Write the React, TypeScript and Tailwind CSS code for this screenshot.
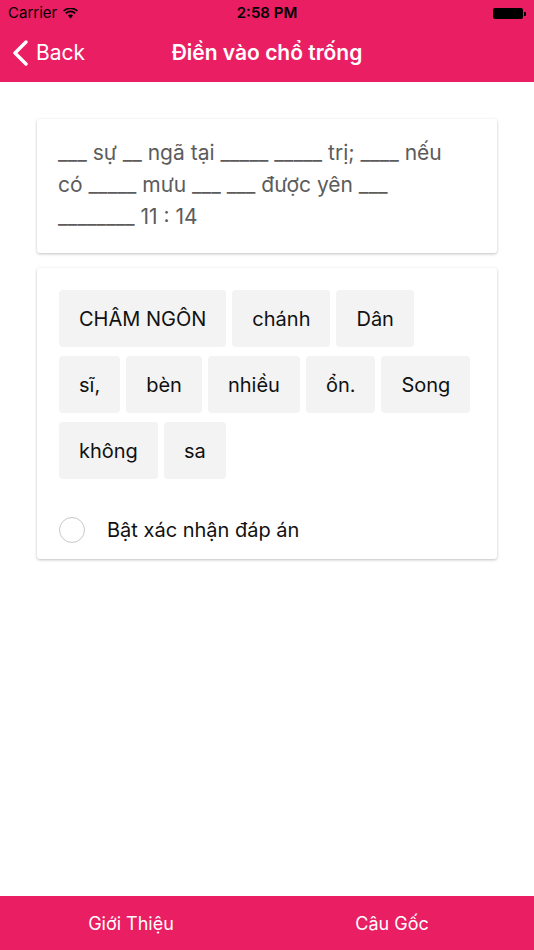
import React from "react";

const words = [
  ["CHÂM NGÔN", "chánh", "Dân"],
  ["sĩ,", "bèn", "nhiều", "ổn.", "Song"],
  ["không", "sa"],
];

export default function App() {
  return (
    <div className="w-[534px] h-[950px] flex flex-col bg-white overflow-hidden" style={{ fontFamily: "Inter, 'Noto Sans', sans-serif" }}>
      <div className="bg-[#e91e63] h-[82px] flex flex-col shrink-0">
        <div className="h-[27px] flex items-center px-[8px] relative text-[15px] text-black">
          <div className="flex items-center gap-[6px]">
            <span>Carrier</span>
            <svg width="15" height="11" viewBox="0 0 15 11">
              <path d="M7.5 10.5 L5 7.6 A3.6 3.6 0 0 1 10 7.6 Z" fill="black" />
              <path d="M2.8 5.3 A6.8 6.8 0 0 1 12.2 5.3" stroke="black" strokeWidth="1.6" fill="none" />
              <path d="M0.6 3 A10 10 0 0 1 14.4 3" stroke="black" strokeWidth="1.6" fill="none" />
            </svg>
          </div>
          <span className="absolute left-0 right-0 text-center font-semibold">2:58 PM</span>
          <div className="ml-auto flex items-center">
            <div className="w-[30px] h-[11px] bg-black rounded-[2px]" />
            <div className="w-[2px] h-[4px] bg-black ml-[1px] rounded-r-[1px]" />
          </div>
        </div>
        <div className="flex-1 flex items-center relative pb-[3px]">
          <div className="flex items-center pl-[12px] text-white gap-[7px]">
            <svg width="17" height="26" viewBox="0 0 17 26">
              <path d="M14 2 L3 13 L14 24" stroke="white" strokeWidth="3.4" fill="none" strokeLinecap="round" strokeLinejoin="round" />
            </svg>
            <span className="text-[21px]">Back</span>
          </div>
          <span className="absolute left-0 right-0 text-center text-white text-[21px] font-semibold pointer-events-none">Điền vào chổ trống</span>
        </div>
      </div>

      <div className="flex-1 px-[37px] pt-[37px] flex flex-col gap-[15px]">
        <div className="bg-white rounded-[3px] shadow-[0_1px_3px_rgba(0,0,0,0.25)] pl-[21px] pr-[30px] pt-[18px] pb-[20px] text-[21px] leading-[32px] text-[#5c5c5c]">
          ___ sự __ ngã tại _____ _____ trị; ____ nếu có _____ mưu ___ ___ được yên ___ ________ 11 : 14
        </div>
        <div className="bg-white rounded-[3px] shadow-[0_1px_3px_rgba(0,0,0,0.25)] px-[22px] pt-[22px] pb-[16px]">
          <div className="flex flex-col gap-[9px]">
            {words.map((row, i) => (
              <div key={i} className="flex gap-[6px]">
                {row.map((w) => (
                  <div key={w} className="h-[57px] px-[20px] flex items-center bg-[#f3f3f3] rounded-[4px] text-[20px] text-[#111]">
                    {w}
                  </div>
                ))}
              </div>
            ))}
          </div>
          <div className="flex items-center mt-[37px] h-[27px]">
            <div className="w-[26px] h-[26px] rounded-full border border-[#c8c8c8]" />
            <span className="ml-[22px] text-[20px] text-[#111]">Bật xác nhận đáp án</span>
          </div>
        </div>
      </div>

      <div className="bg-[#e91e63] h-[54px] shrink-0 flex items-center text-white text-[18px]">
        <div className="w-[262px] text-center">Giới Thiệu</div>
        <div className="w-[260px] text-center">Câu Gốc</div>
      </div>
    </div>
  );
}
